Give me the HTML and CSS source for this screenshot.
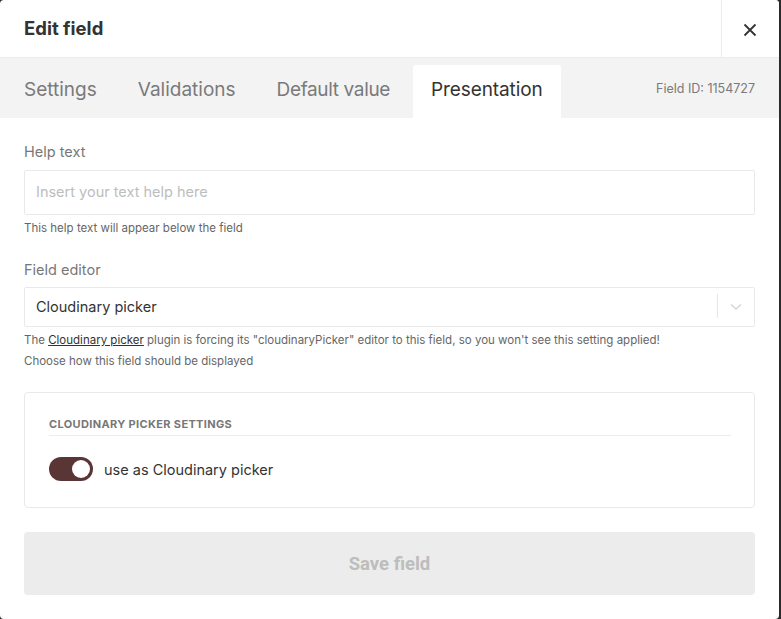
FILE: index.html
```html
<!DOCTYPE html>
<html>
<head>
<meta charset="utf-8">
<link rel="stylesheet" href="styles.css">
</head>
<body>
<div class="modal">
  <header class="modal-head">
    <h1 class="title">Edit field</h1>
    <button class="close" aria-label="Close">
      <svg width="14" height="14" viewBox="0 0 14 14"><path d="M1.5 1.5 L12.5 12.5 M12.5 1.5 L1.5 12.5" stroke="#333" stroke-width="1.8" fill="none"/></svg>
    </button>
  </header>
  <nav class="tabs">
    <span class="tab">Settings</span>
    <span class="tab">Validations</span>
    <span class="tab">Default value</span>
    <span class="tab active">Presentation</span>
    <span class="field-id">Field ID: 1154727</span>
  </nav>
  <main class="body">
    <div class="group">
      <label class="label">Help text</label>
      <div class="input placeholder">Insert your text help here</div>
      <p class="hint">This help text will appear below the field</p>
    </div>
    <div class="group">
      <label class="label">Field editor</label>
      <div class="select">
        <span class="select-value">Cloudinary picker</span>
        <span class="select-sep"></span>
        <span class="select-arrow">
          <svg width="12" height="8" viewBox="0 0 12 8"><path d="M1 1.5 L6 6 L11 1.5" stroke="#d6d6d6" stroke-width="1.6" fill="none"/></svg>
        </span>
      </div>
      <p class="hint">The <a class="link">Cloudinary picker</a> plugin is forcing its "cloudinaryPicker" editor to this field, so you won't see this setting applied!</p>
      <p class="hint">Choose how this field should be displayed</p>
    </div>
    <section class="card">
      <h2 class="card-title">CLOUDINARY PICKER SETTINGS</h2>
      <div class="toggle-row">
        <span class="toggle"><span class="knob"></span></span>
        <span class="toggle-label">use as Cloudinary picker</span>
      </div>
    </section>
    <button class="save">Save field</button>
  </main>
</div>
</body>
</html>
```
FILE: styles.css
```css
* { box-sizing: border-box; }
html, body { margin: 0; padding: 0; }
body {
  background: #2b2b2b;
  font-family: Inter, "Noto Sans", sans-serif;
  width: 781px;
  height: 619px;
  overflow: hidden;
}
.modal {
  width: 779px;
  height: 619px;
  background: #fff;
  border-radius: 4px;
  overflow: hidden;
  display: flex;
  flex-direction: column;
}
.modal-head {
  height: 58px;
  display: flex;
  align-items: stretch;
  border-bottom: 1px solid #ececec;
}
.title {
  flex: 1;
  margin: 0;
  padding-left: 24px;
  font-size: 18.5px;
  font-weight: 700;
  color: #333;
  line-height: 56px;
}
.close {
  width: 58px;
  border: 0;
  border-left: 1px solid #ececec;
  background: #fff;
  display: flex;
  align-items: center;
  justify-content: center;
  padding: 2px 2px 0 0;
}
.tabs {
  height: 60px;
  background: #f3f3f3;
  display: flex;
  align-items: flex-end;
}
.tab {
  height: 53px;
  padding: 0 24px 4px 24px;
  display: flex;
  align-items: center;
  font-size: 19px;
  color: #7a7a7a;
}
.tab:nth-child(2), .tab:nth-child(3) { padding-left: 17px; }
.tab:nth-child(3) { letter-spacing: -0.35px; padding-right: 23px; }
.tab.active {
  background: #fff;
  color: #333;
  padding: 0 18px 4px;
  border-radius: 3px 3px 0 0;
  letter-spacing: -0.1px;
}
.field-id {
  margin-left: auto;
  align-self: center;
  font-size: 12.5px;
  color: #7a7a7a;
  padding-right: 24px;
}
.body {
  padding: 24px 24px 0;
  display: flex;
  flex-direction: column;
}
.group + .group { margin-top: 24px; }
.label {
  display: block;
  font-size: 14.5px;
  color: #777;
  margin-top: 1px;
  margin-bottom: 9px;
  line-height: 18px;
}
.input, .select {
  height: 45px;
  border: 1px solid #e9e9e9;
  border-radius: 2px;
  display: flex;
  align-items: center;
  padding-left: 11px;
  padding-bottom: 2px;
  font-size: 14.5px;
}
.placeholder { color: #bdbdbd; }
.select { height: 40px; color: #333; padding-bottom: 2px; margin-top: -1px; }
.select-value { flex: 1; }
.select-sep {
  width: 1px;
  height: 24px;
  background: #e6e6e6;
}
.select-arrow {
  width: 36px;
  display: flex;
  justify-content: center;
  padding-top: 2px;
}
.hint {
  margin: 5px 0 0;
  font-size: 11.5px;
  line-height: 16px;
  color: #666;
}
.hint + .hint { margin-top: 5px; }
.link { color: #333; text-decoration: underline; }
.card {
  margin-top: 23px;
  border: 1px solid #e9e9e9;
  border-radius: 4px;
  padding: 24px 23px 24px 24px;
  height: 116px;
}
.card-title {
  margin: 0;
  font-size: 11px;
  font-weight: 700;
  color: #777;
  letter-spacing: 0.35px;
  padding-bottom: 4px;
  border-bottom: 1px solid #ececec;
}
.toggle-row {
  display: flex;
  align-items: center;
  margin-top: 21px;
}
.toggle {
  width: 44px;
  height: 24px;
  border-radius: 12px;
  background: #5a3536;
  display: flex;
  align-items: center;
  justify-content: flex-end;
  padding-right: 3px;
}
.knob {
  width: 18px;
  height: 18px;
  border-radius: 50%;
  background: #fff;
}
.toggle-label {
  margin-left: 11px;
  font-size: 14.5px;
  color: #333;
}
.save {
  margin-top: 24px;
  height: 63px;
  border: 0;
  border-radius: 4px;
  background: #ececec;
  color: #bdbdbd;
  font-family: Roboto, Inter, sans-serif;
  font-weight: 700;
  font-size: 18.5px;
  padding: 0;
}
```
